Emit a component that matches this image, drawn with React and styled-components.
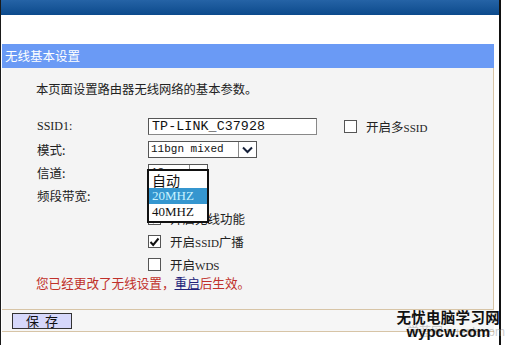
import React from "react";
import styled, { createGlobalStyle } from "styled-components";

const GlobalStyle = createGlobalStyle`
  html, body { margin: 0; padding: 0; background: #ffffff; overflow: hidden; }
  body { font-family: "Noto Sans CJK SC", "Noto Sans", sans-serif; }
`;

const CJK = `"Noto Sans CJK SC", "Noto Sans", sans-serif`;
const MONO = `"Liberation Mono", "DejaVu Sans Mono", monospace`;
const SERIF = `"Liberation Serif", "Noto Sans CJK SC", serif`;

const Page = styled.div`
  position: relative;
  width: 506px;
  height: 345px;
  overflow: hidden;
`;

const Window = styled.div`
  width: 501px;
  height: 345px;
  box-sizing: border-box;
  border-left: 1px solid #1a1a1a;
  border-right: 2px solid #111;
  display: flex;
  flex-direction: column;
  background: #fff;
  overflow: hidden;
`;

const TopBar = styled.div`
  height: 15px;
  flex: none;
  background: linear-gradient(#2563a6, #0c4a8c);
`;

const Gap = styled.div`
  height: 29px;
  flex: none;
`;

const Panel = styled.div`
  width: 492px;
  margin-left: 1px;
  display: flex;
  flex-direction: column;
`;

const Header = styled.div`
  height: 24px;
  background: #6a9af5;
  color: #fff;
  font-family: ${CJK};
  font-size: 12.5px;
  line-height: 24px;
  padding-left: 3px;
`;

const Body = styled.div`
  position: relative;
  background: #f4f4f4;
  border-right: 1px solid #d7c4a6;
  padding: 12px 0 13px 34px;
  height: 241px;
  box-sizing: border-box;
  color: #222;
  font-family: ${CJK};
  font-size: 12px;
`;

const Intro = styled.div`
  line-height: 18px;
  font-size: 12.3px;
  margin-bottom: 17px;
`;

const Grid = styled.div`
  display: grid;
  grid-template-columns: 112px auto;
  grid-auto-rows: 23px;
  align-items: center;
`;

const Label = styled.div`
  font-family: ${(p) => (p.$latin ? SERIF : CJK)};
  font-size: ${(p) => (p.$latin ? "12px" : "12.5px")};
  padding-left: 1px;
`;

const Field = styled.div`
  display: flex;
  align-items: center;
  grid-column: ${(p) => (p.$wide ? "2" : "auto")};
`;

const TextInput = styled.div`
  width: 169px;
  height: 17px;
  box-sizing: border-box;
  border: 1px solid #555;
  border-right-color: #888;
  border-bottom-color: #888;
  background: #fff;
  font-family: ${MONO};
  font-size: 13.3px;
  line-height: 15px;
  padding-left: 3px;
  color: #111;
  letter-spacing: 0.1px;
`;

const Select = styled.div`
  width: ${(p) => p.$w}px;
  height: 17px;
  box-sizing: border-box;
  border: 1px solid #555;
  background: #fff;
  display: flex;
  align-items: stretch;
`;

const SelectText = styled.div`
  flex: 1;
  font-family: ${MONO};
  font-size: 11px;
  line-height: 15px;
  padding-left: 2px;
  color: #111;
`;

const ArrowBox = styled.div`
  width: 18px;
  box-sizing: border-box;
  border-left: 1px solid #888;
  display: flex;
  align-items: center;
  justify-content: center;
  background: #fff;
`;

const Check = styled.div`
  width: 13px;
  height: 13px;
  box-sizing: border-box;
  border: 1px solid #555;
  background: #fff;
  display: flex;
  align-items: center;
  justify-content: center;
  flex: none;
`;

const CheckText = styled.span`
  margin-left: 9px;
  font-size: 12.5px;
  font-family: ${CJK};
  color: #222;
`;

const Small = styled.span`
  font-family: ${SERIF};
  font-size: 11px;
`;

const MultiSsid = styled.div`
  display: flex;
  align-items: center;
  margin-left: 27px;
`;

const Warning = styled.div`
  margin-top: -2px;
  color: #c0302a;
  font-size: 12.6px;
  line-height: 18px;
`;

const Link = styled.span`
  color: #23237a;
  text-decoration: underline;
`;

const Dropdown = styled.div`
  position: absolute;
  left: 145px;
  top: 101px;
  width: 62px;
  box-sizing: border-box;
  border: 2px solid #111;
  background: #fff;
  padding: 1px 0;
`;

const Option = styled.div`
  height: 16px;
  line-height: 16px;
  padding-left: 3px;
  font-family: ${(p) => (p.$cjk ? CJK : SERIF)};
  font-size: ${(p) => (p.$cjk ? "14px" : "13px")};
  background: ${(p) => (p.$active ? "#3596cf" : "transparent")};
  color: ${(p) => (p.$active ? "#c9f3ff" : "#111")};
`;

const Footer = styled.div`
  height: 21px;
  border-top: 1px solid #d7c4a6;
  border-bottom: 1px solid #d7c4a6;
  background: #f6f6f6;
  display: flex;
  align-items: center;
  padding-left: 10px;
`;

const Button = styled.div`
  width: 60px;
  height: 16px;
  box-sizing: border-box;
  border: 1px solid #333;
  background: #d6d8fb;
  font-family: ${CJK};
  font-size: 13px;
  line-height: 14px;
  text-align: center;
  letter-spacing: 6px;
  text-indent: 6px;
  color: #111;
`;

const Watermark = styled.div`
  position: absolute;
  right: 6px;
  bottom: 6px;
  display: flex;
  flex-direction: column;
  align-items: center;
  line-height: 1;
`;

const WmTitle = styled.div`
  font-family: ${CJK};
  font-weight: 700;
  font-size: 14.5px;
  color: #111;
  letter-spacing: 0.3px;
`;

const WmUrl = styled.div`
  font-family: "Liberation Sans", Arial, sans-serif;
  font-weight: 700;
  font-size: 15px;
  color: #111;
`;

const WmGhost = styled.div`
  position: absolute;
  right: 1px;
  bottom: 7px;
  white-space: nowrap;
  line-height: 1;
  font-family: "Liberation Sans", ${CJK};
  font-size: 12px;
  color: rgba(150, 150, 150, 0.5);
`;

const Chevron = () => (
  <svg width="11" height="8" viewBox="0 0 11 8">
    <path d="M1 1.5 L5.5 6 L10 1.5" fill="none" stroke="#15203a" strokeWidth="2" />
  </svg>
);

const Tick = () => (
  <svg width="11" height="10" viewBox="0 0 11 10">
    <path d="M1.5 5 L4.2 8 L9.5 1.5" fill="none" stroke="#111" strokeWidth="2" />
  </svg>
);

const CheckRow = ({ checked, children }) => (
  <Field $wide>
    <Check>{checked && <Tick />}</Check>
    <CheckText>{children}</CheckText>
  </Field>
);

export default function App() {
  return (
    <>
      <GlobalStyle />
      <Page>
        <Window>
          <TopBar />
          <Gap />
          <Panel>
            <Header>无线基本设置</Header>
            <Body>
              <Intro>本页面设置路由器无线网络的基本参数。</Intro>
              <Grid>
                <Label $latin>SSID1:</Label>
                <Field>
                  <TextInput>TP-LINK_C37928</TextInput>
                  <MultiSsid>
                    <Check />
                    <CheckText>
                      开启多<Small>SSID</Small>
                    </CheckText>
                  </MultiSsid>
                </Field>
                <Label>模式:</Label>
                <Field>
                  <Select $w={109}>
                    <SelectText>11bgn mixed</SelectText>
                    <ArrowBox>
                      <Chevron />
                    </ArrowBox>
                  </Select>
                </Field>
                <Label>信道:</Label>
                <Field>
                  <Select $w={60}>
                    <SelectText>13</SelectText>
                    <ArrowBox>
                      <Chevron />
                    </ArrowBox>
                  </Select>
                </Field>
                <Label>频段带宽:</Label>
                <Field>
                  <Select $w={60}>
                    <SelectText>20MHZ</SelectText>
                    <ArrowBox>
                      <Chevron />
                    </ArrowBox>
                  </Select>
                </Field>
                <CheckRow checked>开启无线功能</CheckRow>
                <CheckRow checked>
                  开启<Small>SSID</Small>广播
                </CheckRow>
                <CheckRow>
                  开启<Small>WDS</Small>
                </CheckRow>
              </Grid>
              <Warning>
                您已经更改了无线设置，<Link>重启</Link>后生效。
              </Warning>
              <Dropdown>
                <Option $cjk>自动</Option>
                <Option $active>20MHZ</Option>
                <Option>40MHZ</Option>
              </Dropdown>
            </Body>
            <Footer>
              <Button>保存</Button>
            </Footer>
          </Panel>
        </Window>
        <WmGhost>学蓝网 xuenb.com</WmGhost>
        <Watermark>
          <WmTitle>无忧电脑学习网</WmTitle>
          <WmUrl>wypcw.com</WmUrl>
        </Watermark>
      </Page>
    </>
  );
}
